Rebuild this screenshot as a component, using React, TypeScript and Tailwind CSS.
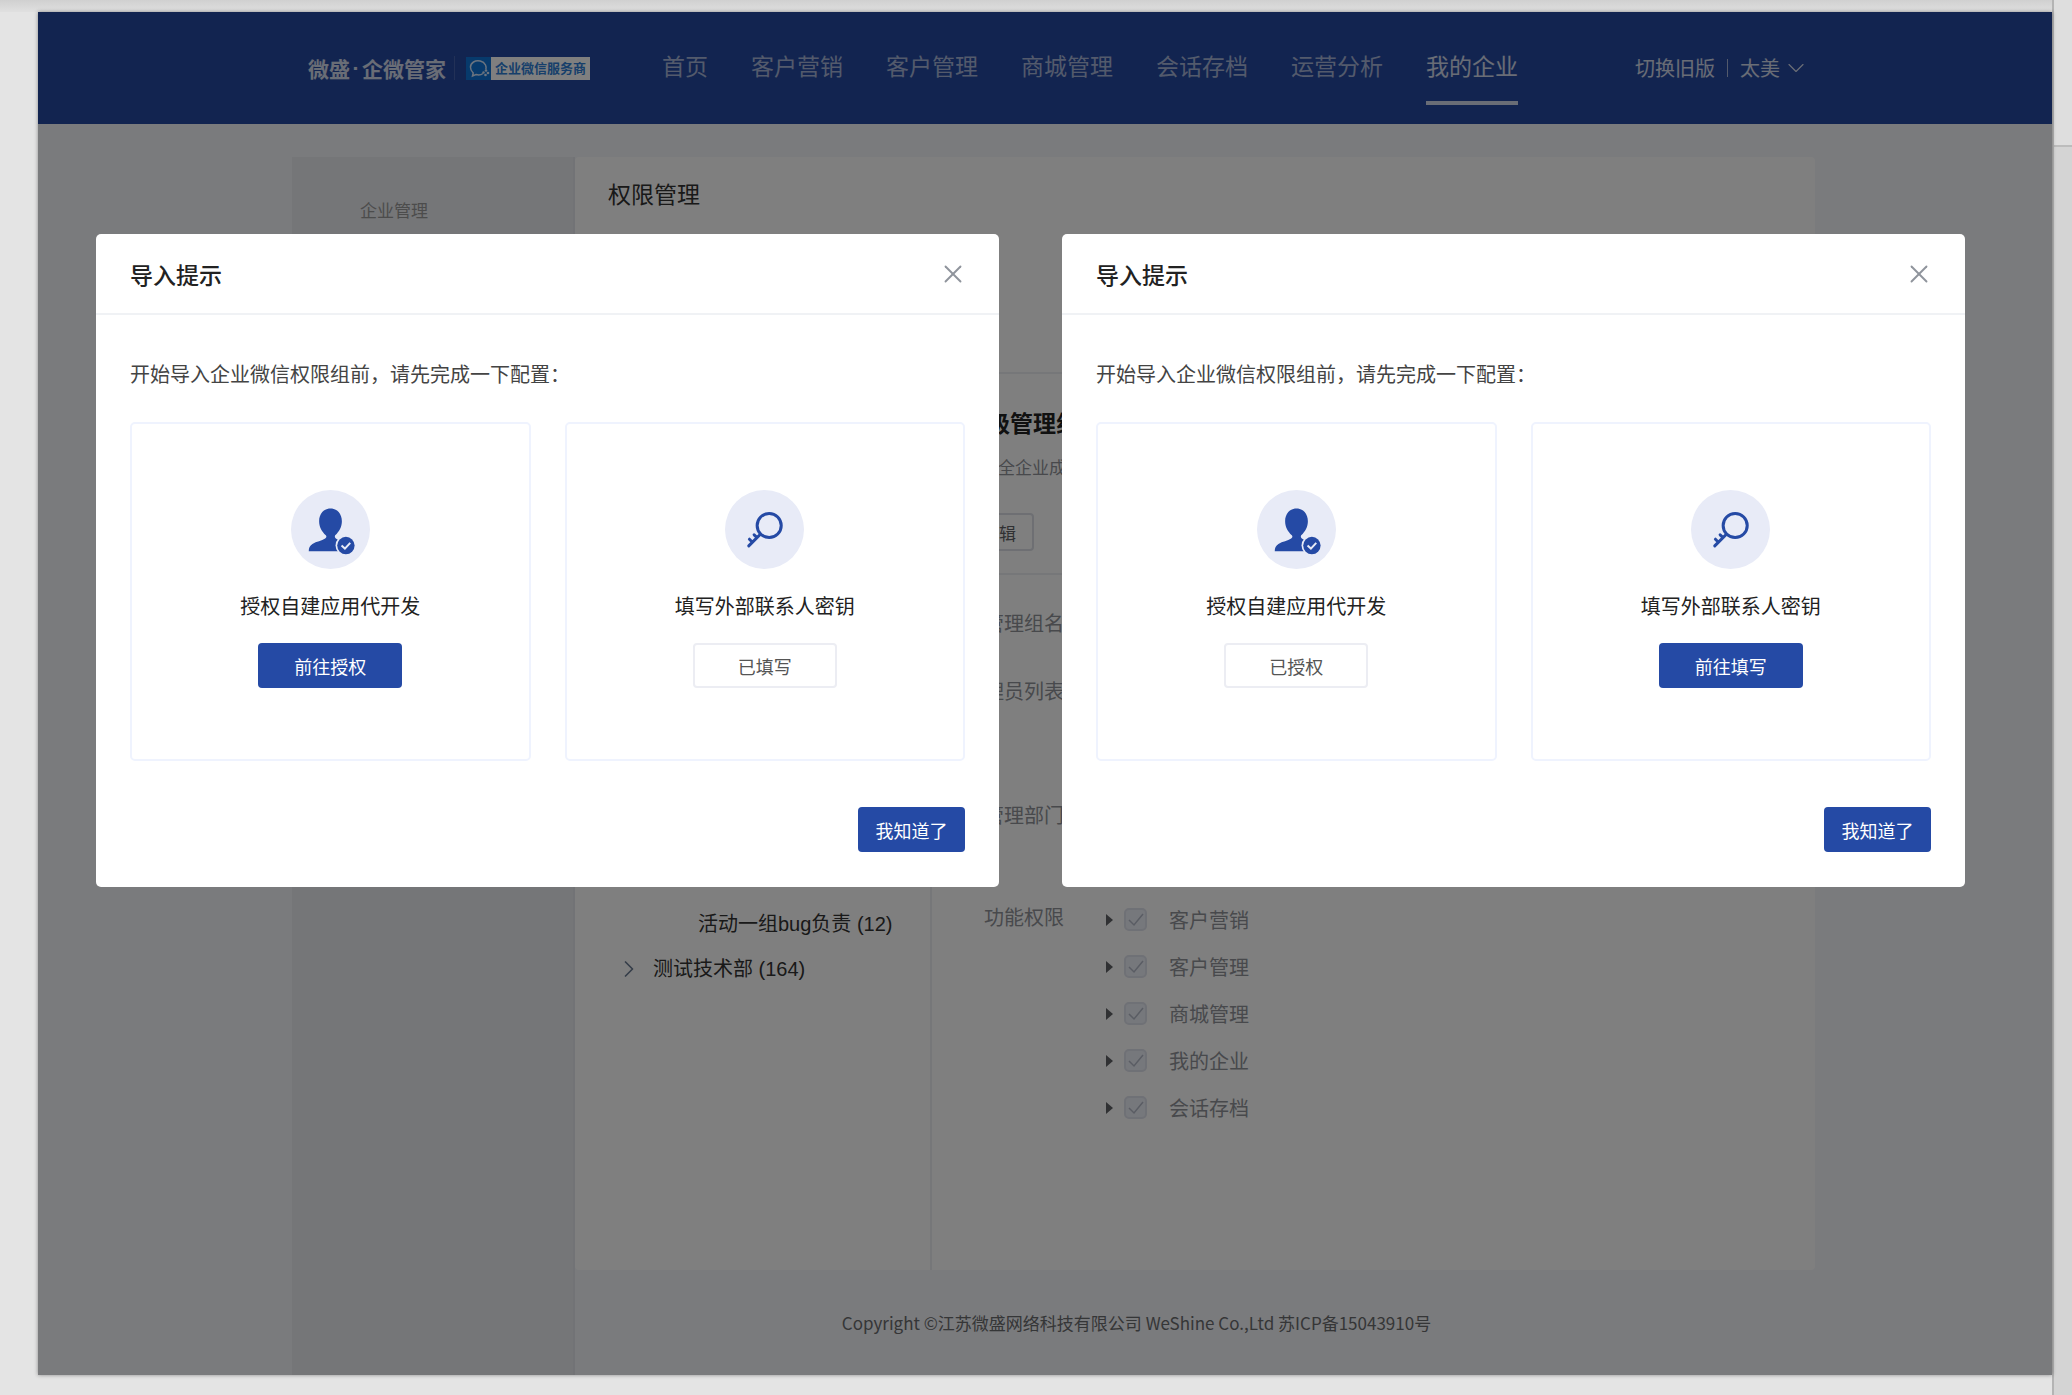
import { ChevronDown, ChevronRight, X } from "lucide-react";
import { useState } from "react";

const navItems = [
  "首页",
  "客户营销",
  "客户管理",
  "商城管理",
  "会话存档",
  "运营分析",
  "我的企业",
];

const permissions = ["客户营销", "客户管理", "商城管理", "我的企业", "会话存档"];

type Step = {
  icon: "user" | "key";
  title: string;
  action: string;
  done: boolean;
};

const dialogs: { id: string; steps: Step[] }[] = [
  {
    id: "authorize",
    steps: [
      { icon: "user", title: "授权自建应用代开发", action: "前往授权", done: false },
      { icon: "key", title: "填写外部联系人密钥", action: "已填写", done: true },
    ],
  },
  {
    id: "secret",
    steps: [
      { icon: "user", title: "授权自建应用代开发", action: "已授权", done: true },
      { icon: "key", title: "填写外部联系人密钥", action: "前往填写", done: false },
    ],
  },
];

function UserIcon() {
  return (
    <svg viewBox="0 0 236 236" className="size-[79px]" aria-hidden="true">
      <circle cx="118" cy="118" r="118" fill="#e8ebf7" />
      <path
        d="M118 55c20 0 34 16 34 38 0 17-8 31-20 42-2 3-1 7 2 10 10 8 26 10 38 16 8 5 11 12 11 22H53c0-10 3-17 11-22 12-7 28-9 38-16 4-3 5-7 2-10-12-11-20-25-20-42 0-22 14-38 34-38z"
        fill="#254aa5"
      />
      <circle cx="164" cy="166" r="31" fill="#e8ebf7" />
      <circle cx="164" cy="166" r="26" fill="#254aa5" />
      <path
        d="M151 166l10 9 16-17"
        fill="none"
        stroke="#e8ebf7"
        strokeWidth="6"
      />
    </svg>
  );
}

function KeyIcon() {
  return (
    <svg viewBox="0 0 236 236" className="size-[79px]" aria-hidden="true">
      <circle cx="118" cy="118" r="118" fill="#e8ebf7" />
      <g fill="none" stroke="#254aa5" strokeWidth="9" strokeLinecap="round">
        <circle cx="132" cy="106" r="36" />
        <path d="M105 133l-34 34M96 142l-9-8M82 156l-9-9" />
      </g>
    </svg>
  );
}

function Logo() {
  return (
    <div className="flex items-center">
      <h1 className="flex text-[21px] font-bold leading-8 text-white/80">
        微盛<span className="w-3 text-center font-['Liberation_Sans']">·</span>企微管家
      </h1>
      <span className="ml-2 h-6 w-px bg-white/15" />
      <div className="ml-[11px] flex h-[23px] items-stretch bg-[#0f75d8]">
        <svg viewBox="0 0 25 23" className="w-[25px]" aria-hidden="true">
          <g fill="none" stroke="#d6e8ff" strokeWidth="1.5">
            <path d="M17 16.500c-2 1.500-4.500 1.800-7 1L6.500 19l.7-3C3.500 12.500 3.500 7.500 7.500 5s10-1 12 3c.6 1.300.8 2.800.4 4.300" />
          </g>
          <g fill="#d6e8ff">
            <circle cx="20" cy="13.500" r="1.300" />
            <circle cx="22" cy="16" r="1.300" />
            <circle cx="19.500" cy="18" r="1.300" />
            <circle cx="17.500" cy="15.500" r="1.200" />
          </g>
        </svg>
        <span className="bg-white px-1 text-[13px] font-bold leading-[22px] text-[#2f7fd6]">
          企业微信服务商
        </span>
      </div>
    </div>
  );
}

function Header() {
  return (
    <header className="flex h-28 items-center bg-[#2448a0] pl-[270px] pr-[242px]">
      <Logo />
      <nav className="ml-[72px] flex gap-[43px] text-[23px] leading-9">
        {navItems.map((item) =>
          item === "我的企业" ? (
            <a
              key={item}
              href="#"
              aria-current="page"
              className="border-b-4 border-white/80 pb-[18px] pt-4 text-white/80"
            >
              {item}
            </a>
          ) : (
            <a key={item} href="#" className="pb-[22px] pt-4 text-white/60">
              {item}
            </a>
          )
        )}
      </nav>
      <div className="ml-auto flex items-center text-xl text-white/80">
        <a href="#">切换旧版</a>
        <span className="mx-3 h-[18px] w-px bg-white/60" />
        <button className="flex items-center gap-0.5">
          太美
          <ChevronDown className="size-7" strokeWidth={1} />
        </button>
      </div>
    </header>
  );
}

function PermissionRow({ name }: { name: string }) {
  return (
    <li className="flex h-[47px] items-center">
      <svg viewBox="0 0 7 12" className="h-3 w-[7px]" aria-hidden="true">
        <path d="M0 0l7 6-7 6z" fill="#606266" />
      </svg>
      <label className="ml-[11px] flex items-center gap-[22px] text-xl text-[#909399]">
        <span className="grid size-[23px]">
          <input
            type="checkbox"
            checked
            disabled
            readOnly
            className="col-start-1 row-start-1 size-[23px] appearance-none rounded-[5px] border-2 border-[#dfe2ec] bg-[#edf0f8]"
          />
          <svg
            viewBox="0 0 23 23"
            className="col-start-1 row-start-1"
            aria-hidden="true"
          >
            <path
              d="M5 12l5 5 9-11"
              fill="none"
              stroke="#b4bac8"
              strokeWidth="1.500"
            />
          </svg>
        </span>
        {name}
      </label>
    </li>
  );
}

function DepartmentTree() {
  return (
    <ul className="w-[357px] border-r-2 border-[#eceef3] pt-[527px] font-['Liberation_Sans','Noto_Sans_CJK_SC',sans-serif] text-xl text-[#333]">
      <li className="flex h-[45px] items-center pl-[123px]">
        活动一组bug负责 (12)
      </li>
      <li className="flex h-[45px] items-center pl-10">
        <ChevronRight className="size-7 text-[#6b7c93]" strokeWidth={1.5} />
        <span className="ml-2.5">测试技术部 (164)</span>
      </li>
    </ul>
  );
}

function GroupDetail() {
  return (
    <section className="flex-1">
      <div className="border-b-2 border-[#eceef3] px-8 pb-[22px] pt-8">
        <h3 className="text-[23px] font-bold leading-8 text-[#222]">
          超级管理组
        </h3>
        <p className="mt-[17px] text-[17px] leading-6 text-[#909399]">
          管理全企业成员
        </p>
        <button className="mt-[34px] h-[38px] rounded border-2 border-[#dcdfe6] px-4 text-[17px] leading-none text-[#606266]">
          编辑
        </button>
      </div>
      <div className="pl-8 pt-[33px] text-xl text-[#909399]">
        <div className="h-[68px] w-[100px] text-right leading-[30px]">管理组名</div>
        <div className="h-[124px] w-[100px] text-right leading-[30px]">管理员列表</div>
        <div className="h-24 w-[100px] text-right leading-[30px]">管理部门</div>
        <div className="flex">
          <div className="w-[100px] text-right leading-[42px]">功能权限</div>
          <ul className="ml-[42px]">
            {permissions.map((name) => (
              <PermissionRow key={name} name={name} />
            ))}
          </ul>
        </div>
      </div>
    </section>
  );
}

function ImportDialog({ id, steps }: { id: string; steps: Step[] }) {
  const [open, setOpen] = useState(true);

  if (!open) return null;

  return (
    <div
      role="dialog"
      aria-labelledby={`${id}-title`}
      className="min-w-0 flex-1 rounded-[5px] bg-white"
    >
      <div className="flex h-[81px] items-center justify-between border-b-2 border-[#f0f2f5] pl-[34px] pr-[31px]">
        <h2 id={`${id}-title`} className="text-[23px] font-medium leading-9 text-[#222]">
          导入提示
        </h2>
        <button aria-label="关闭" onClick={() => setOpen(false)}>
          <X className="size-[30px] text-[#8f949c]" strokeWidth={1.5} />
        </button>
      </div>
      <div className="px-[34px] pb-[35px] pt-[43px]">
        <p className="text-xl leading-8 text-[#444]">
          开始导入企业微信权限组前，请先完成一下配置：
        </p>
        <div className="mt-8 grid grid-cols-2 gap-[34px]">
          {steps.map((step) => (
            <div
              key={step.title}
              className="flex flex-col items-center rounded-[5px] border-2 border-[#eff3fe] pb-[71px] pt-[66px]"
            >
              {step.icon === "user" ? <UserIcon /> : <KeyIcon />}
              <h3 className="mt-[21px] text-xl leading-8 text-[#222]">
                {step.title}
              </h3>
              {step.done ? (
                <button className="mt-[21px] h-[45px] w-36 rounded border-2 border-[#ecedf3] text-lg leading-none text-[#555]">
                  {step.action}
                </button>
              ) : (
                <button className="mt-[21px] h-[45px] w-36 rounded bg-[#254aa5] text-lg leading-none text-white">
                  {step.action}
                </button>
              )}
            </div>
          ))}
        </div>
        <div className="mt-[46px] flex justify-end">
          <button
            onClick={() => setOpen(false)}
            className="h-[45px] w-[107px] rounded bg-[#254aa5] text-lg leading-none text-white"
          >
            我知道了
          </button>
        </div>
      </div>
    </div>
  );
}

export default function App() {
  return (
    <div
      lang="zh-CN"
      className="flex min-h-screen bg-[#e4e4e4] font-['Noto_Sans_CJK_SC',sans-serif]"
    >
      <div className="flex flex-1 flex-col">
        <div className="h-3 bg-gradient-to-b from-[#d0d0d0] to-[#e0e0e0]" />
        <div className="relative mb-5 ml-[38px] flex flex-1 flex-col bg-[#f4f6fa] shadow-[0_0_4px_rgba(0,0,0,0.4)]">
          <Header />
          <div className="flex flex-1 pl-[254px] pr-[237px] pt-[33px]">
            <aside className="w-[283px] border-r-2 border-[#e4e6ec] bg-[#eaecf0] pl-[68px] pt-[37px] text-[17px] leading-8 text-[#999]">
              企业管理
            </aside>
            <div className="flex flex-1 flex-col">
              <main className="flex flex-1 flex-col rounded-sm bg-white">
                <h2 className="h-[217px] border-b-2 border-[#eceef3] pl-[33px] pt-[18px] text-[23px] leading-9 text-[#333]">
                  权限管理
                </h2>
                <div className="flex flex-1">
                  <DepartmentTree />
                  <GroupDetail />
                </div>
              </main>
              <footer className="flex h-[105px] items-center justify-center pr-[117px] text-[17px] text-[#6b6c6e]">
                Copyright ©江苏微盛网络科技有限公司 WeShine Co.,Ltd 苏ICP备15043910号
              </footer>
            </div>
          </div>

          {/* Dialogs over the dimmed page */}
          <div className="absolute inset-0 flex items-start gap-[63px] bg-black/50 pl-[58px] pr-[87px] pt-[222px]">
            {dialogs.map((dialog) => (
              <ImportDialog key={dialog.id} {...dialog} />
            ))}
          </div>
        </div>
      </div>
      <div className="w-5 border-l-2 border-[#b4b4b4] bg-[#d4d4d4]">
        <div className="h-[147px] border-b-2 border-[#bcbcbc] bg-[#dedede]" />
      </div>
    </div>
  );
}
